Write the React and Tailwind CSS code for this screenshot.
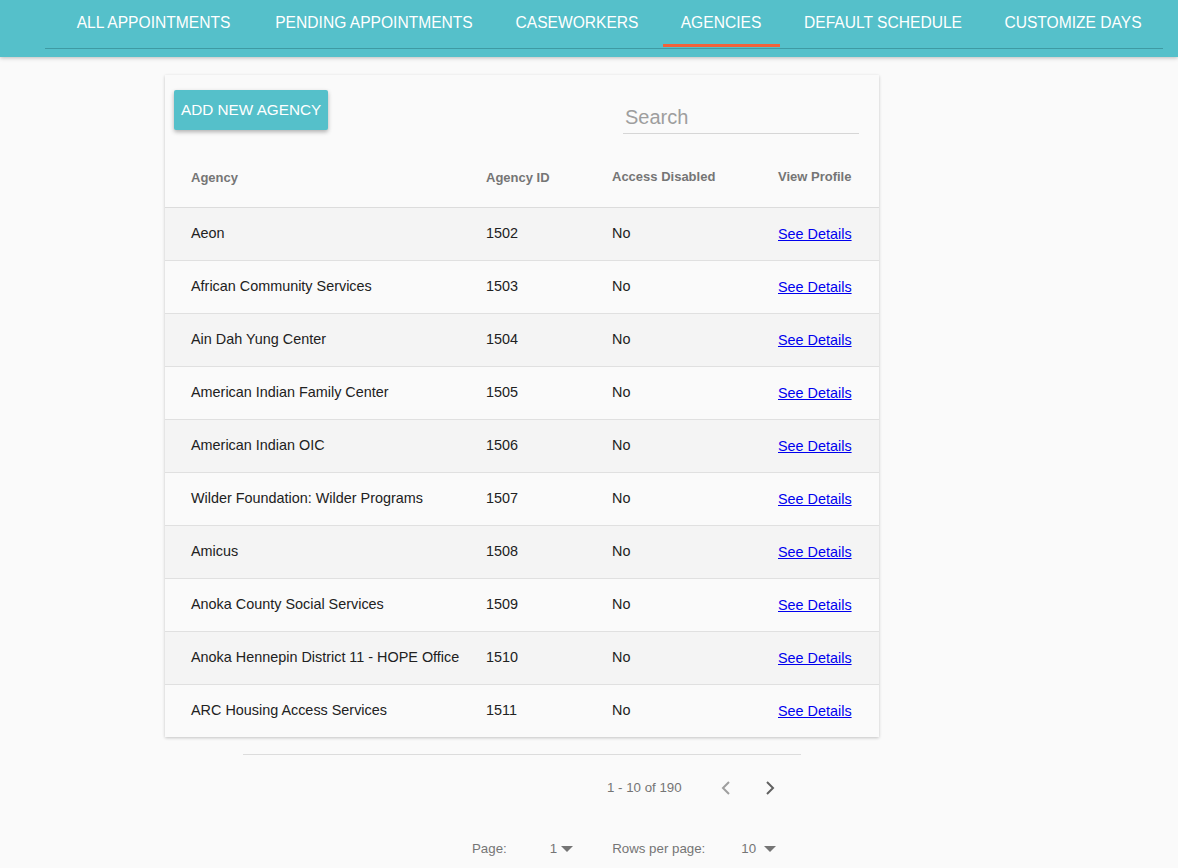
import React from 'react';

const tabs = [
  { label: 'ALL APPOINTMENTS', w: 'w-[199px]' },
  { label: 'PENDING APPOINTMENTS', w: 'w-[242px]' },
  { label: 'CASEWORKERS', w: 'w-[164px]' },
  { label: 'AGENCIES', w: 'w-[124px]' },
  { label: 'DEFAULT SCHEDULE', w: 'w-[200px]' },
  { label: 'CUSTOMIZE DAYS', w: 'w-[180px]' },
];

const agencies = [
  { name: 'Aeon', id: 1502 },
  { name: 'African Community Services', id: 1503 },
  { name: 'Ain Dah Yung Center', id: 1504 },
  { name: 'American Indian Family Center', id: 1505 },
  { name: 'American Indian OIC', id: 1506 },
  { name: 'Wilder Foundation: Wilder Programs', id: 1507 },
  { name: 'Amicus', id: 1508 },
  { name: 'Anoka County Social Services', id: 1509 },
  { name: 'Anoka Hennepin District 11 - HOPE Office', id: 1510 },
  { name: 'ARC Housing Access Services', id: 1511 },
];

const Caret = () => (
  <svg width="12" height="6" viewBox="0 0 12 6" className="ml-[4px]">
    <path d="M0 0 L12 0 L6 6 Z" fill="#757575" />
  </svg>
);

const App = () => {
  return (
    <div className="min-h-[868px] bg-[#fafafa] font-['Liberation_Sans',Arial,sans-serif]">
      {/* Top nav */}
      <div className="h-[57px] bg-[#55c0ca] shadow-[0_1px_4px_rgba(0,0,0,0.25)]">
        <div className="ml-[45px] mr-[15px] h-[49px] border-b border-[#3f9aa3] flex pl-[9px]">
          {tabs.map((t) => (
            <div
              key={t.label}
              className={`relative ${t.w} shrink-0 h-full flex items-center justify-center whitespace-nowrap text-white text-[15.6px] pb-[3px]`}
            >
              {t.label}
              {t.label === 'AGENCIES' && (
                <div className="absolute left-[4px] right-[3px] bottom-[1px] h-[3px] bg-[#f1623a]" />
              )}
            </div>
          ))}
        </div>
      </div>

      {/* Card */}
      <div className="ml-[165px] mt-[18px] w-[714px] bg-[#fafafa] shadow-[0_1px_3px_rgba(0,0,0,0.22)]">
        <div className="flex items-start justify-between pl-[9px] pr-[20px] pt-[15px]">
          <button className="h-[40px] px-[7px] bg-[#55c0ca] text-white text-[15.3px] rounded-[2px] shadow-[0_2px_4px_rgba(0,0,0,0.3)]">
            ADD NEW AGENCY
          </button>
          <div className="mt-[12px] w-[236px] border-b border-[#d6d6d6] pb-[1px] pl-[2px] text-[20px] text-[#9e9e9e]">
            Search
          </div>
        </div>

        <table className="w-full mt-[16px] border-collapse text-left">
          <thead>
            <tr className="h-[57px] border-b border-[#dcdcdc] text-[13px] font-bold text-[#757575]">
              <th className="pl-[26px] w-[321px] font-bold pb-[2px]">Agency</th>
              <th className="w-[126px] font-bold pb-[2px]">Agency ID</th>
              <th className="w-[166px] font-bold pb-[4px]">Access Disabled</th>
              <th className="font-bold pb-[4px]">View Profile</th>
            </tr>
          </thead>
          <tbody>
            {agencies.map((a, idx) => (
              <tr
                key={a.id}
                className={`h-[53px] text-[14.4px] text-[#212121] ${
                  idx < agencies.length - 1 ? 'border-b border-[#e0e0e0]' : ''
                } ${idx % 2 === 0 ? 'bg-[#f4f4f4]' : 'bg-[#fafafa]'}`}
              >
                <td className="pl-[26px] pt-[1px]">{a.name}</td>
                <td className="pt-[1px]">{a.id}</td>
                <td className="pt-[1px]">No</td>
                <td className="pt-[3px]">
                  <a href="#" className="text-[#0000ee] underline">
                    See Details
                  </a>
                </td>
              </tr>
            ))}
          </tbody>
        </table>
      </div>

      {/* Pagination */}
      <div className="ml-[243px] w-[558px] mt-[17px] border-t border-[#dcdcdc]" />
      <div className="flex items-center ml-[607px] mt-[23px] text-[13.3px] text-[#757575]">
        <span>1 - 10 of 190</span>
        <svg width="10" height="14" viewBox="0 0 10 14" className="ml-[39px]">
          <path d="M8 1 L2 7 L8 13" stroke="#9e9e9e" strokeWidth="2" fill="none" />
        </svg>
        <svg width="10" height="14" viewBox="0 0 10 14" className="ml-[34px]">
          <path d="M2 1 L8 7 L2 13" stroke="#616161" strokeWidth="2" fill="none" />
        </svg>
      </div>
      <div className="flex items-center ml-[472px] mt-[41px] text-[13.3px] text-[#757575]">
        <span>Page:</span>
        <span className="ml-[43px]">1</span>
        <Caret />
        <span className="ml-[39px]">Rows per page:</span>
        <span className="ml-[36px]">10</span>
        <span className="ml-[4px]"><Caret /></span>
      </div>
    </div>
  );
};

export default App;
